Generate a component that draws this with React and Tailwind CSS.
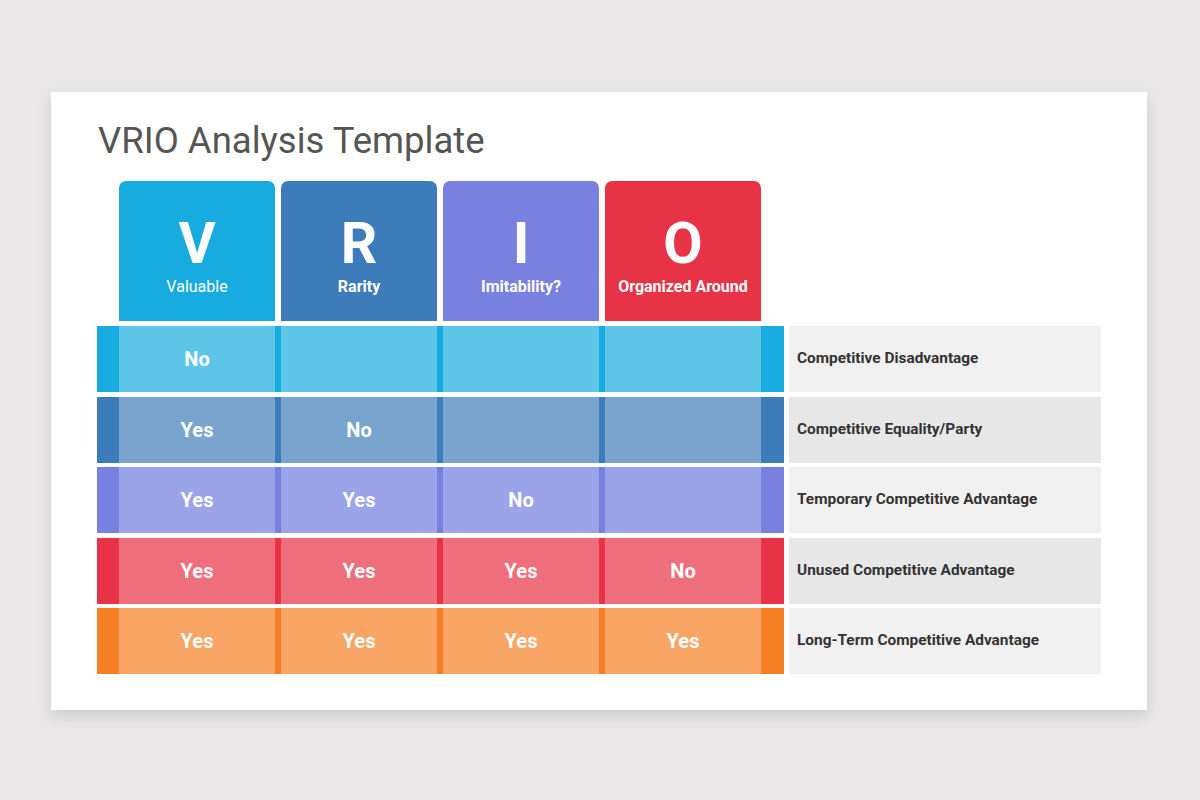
const headers = [
  { letter: 'V', label: 'Valuable', bg: 'bg-[#17abdf]', weight: 'font-normal' },
  { letter: 'R', label: 'Rarity', bg: 'bg-[#3d7cba]', weight: 'font-bold' },
  { letter: 'I', label: 'Imitability?', bg: 'bg-[#7880e0]', weight: 'font-bold' },
  { letter: 'O', label: 'Organized Around', bg: 'bg-[#e83346]', weight: 'font-bold' },
];

const rows = [
  { dark: 'bg-[#17abdf]', light: 'bg-[#5dc5e8]', cells: ['No', '', '', ''], result: 'Competitive Disadvantage', box: 'bg-[#f1f1f1]' },
  { dark: 'bg-[#3d7cba]', light: 'bg-[#79a4ce]', cells: ['Yes', 'No', '', ''], result: 'Competitive Equality/Party', box: 'bg-[#e7e7e7]' },
  { dark: 'bg-[#7880e0]', light: 'bg-[#9ca4e9]', cells: ['Yes', 'Yes', 'No', ''], result: 'Temporary Competitive Advantage', box: 'bg-[#f1f1f1]' },
  { dark: 'bg-[#e83346]', light: 'bg-[#ef6e7c]', cells: ['Yes', 'Yes', 'Yes', 'No'], result: 'Unused Competitive Advantage', box: 'bg-[#e7e7e7]' },
  { dark: 'bg-[#f58024]', light: 'bg-[#f9a566]', cells: ['Yes', 'Yes', 'Yes', 'Yes'], result: 'Long-Term Competitive Advantage', box: 'bg-[#f1f1f1]' },
];

export default function App() {
  return (
    <div className="w-[1200px] h-[800px] bg-[#e9e7e8] pt-[92px] pl-[51px] font-['Roboto',sans-serif]">
      <div className="w-[1096px] h-[618px] bg-white shadow-[0_6px_14px_rgba(0,0,0,0.12)] pt-[24px] pl-[46px]">
        <h1 className="text-[36.5px] leading-[50px] text-[#555555] pl-[1px]">VRIO Analysis Template</h1>

        <div className="flex gap-[6px] pl-[22px] mt-[15px]">
          {headers.map(h => (
            <div key={h.letter} className={`${h.bg} w-[156px] h-[140px] rounded-t-[7px] flex flex-col items-center text-white`}>
              <span className="text-[57px] font-bold leading-none mt-[34px]">{h.letter}</span>
              <span className={`text-[16px] ${h.weight} mt-[3px]`}>{h.label}</span>
            </div>
          ))}
        </div>

        <div className="flex flex-col gap-[4.5px] mt-[5px]">
          {rows.map(r => (
            <div key={r.result} className="flex gap-[5px] h-[66px]">
              <div className={`${r.dark} w-[687px] flex gap-[6px] pl-[22px] pr-[23px]`}>
                {r.cells.map((c, i) => (
                  <div key={i} className={`${r.light} w-[156px] flex items-center justify-center text-white font-bold text-[20px]`}>
                    {c}
                  </div>
                ))}
              </div>
              <div className={`${r.box} w-[312px] flex items-center pl-[8px] text-[15.4px] font-bold text-[#333333]`}>
                {r.result}
              </div>
            </div>
          ))}
        </div>
      </div>
    </div>
  );
}
